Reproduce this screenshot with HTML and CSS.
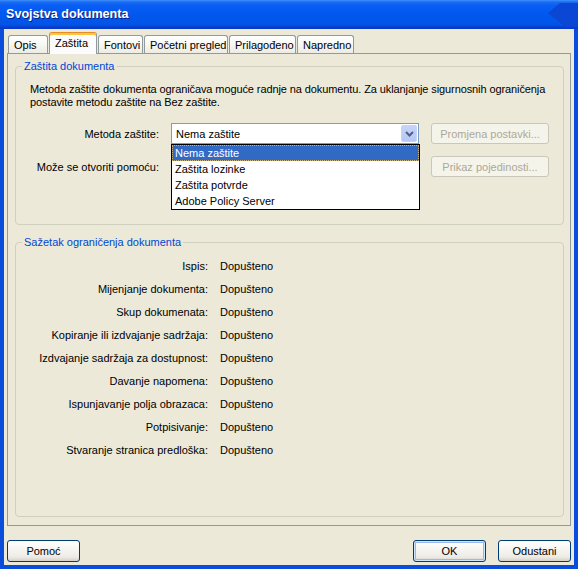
FILE: index.html
```html
<!DOCTYPE html>
<html lang="hr">
<head>
  <meta charset="UTF-8" />
  <title>Svojstva dokumenta</title>
  <link rel="stylesheet" href="styles.css">
</head>
<body>

  <div class="window">
    <div class="titlebar">
      <span class="title">Svojstva dokumenta</span>
      <span class="title-cap"></span>
    </div>

    <div class="frame">
      <div class="tabs">
        <div class="tab tab-opis">Opis</div>
        <div class="tab tab-zastita active">Zaštita</div>
        <div class="tab tab-fontovi">Fontovi</div>
        <div class="tab tab-pocetni">Početni pregled</div>
        <div class="tab tab-prilagodeno">Prilagođeno</div>
        <div class="tab tab-napredno">Napredno</div>
      </div>

      <div class="panel">
        <fieldset class="group group-protect">
          <legend>Zaštita dokumenta</legend>
          <p class="desc">Metoda zaštite dokumenta ograničava moguće radnje na dokumentu. Za uklanjanje sigurnosnih ograničenja<br>postavite metodu zaštite na Bez zaštite.</p>

          <div class="form-grid">
            <label class="form-label">Metoda zaštite:</label>
            <div class="combo">
              <div class="combo-box">
                <span>Nema zaštite</span>
                <span class="combo-arrow">
                  <svg width="9" height="6" viewBox="0 0 9 6">
                    <path d="M1 1 L4.5 4.5 L8 1" fill="none" stroke="#4d6185" stroke-width="2"/>
                  </svg>
                </span>
              </div>
              <ul class="combo-list">
                <li class="selected">Nema zaštite</li>
                <li>Zaštita lozinke</li>
                <li>Zaštita potvrde</li>
                <li>Adobe Policy Server</li>
              </ul>
            </div>
            <button class="btn" disabled>Promjena postavki...</button>

            <label class="form-label">Može se otvoriti pomoću:</label>
            <div></div>
            <button class="btn" disabled>Prikaz pojedinosti...</button>
          </div>
        </fieldset>

        <fieldset class="group group-summary">
          <legend>Sažetak ograničenja dokumenta</legend>
          <dl class="summary">
            <dt>Ispis:</dt><dd>Dopušteno</dd>
            <dt>Mijenjanje dokumenta:</dt><dd>Dopušteno</dd>
            <dt>Skup dokumenata:</dt><dd>Dopušteno</dd>
            <dt>Kopiranje ili izdvajanje sadržaja:</dt><dd>Dopušteno</dd>
            <dt>Izdvajanje sadržaja za dostupnost:</dt><dd>Dopušteno</dd>
            <dt>Davanje napomena:</dt><dd>Dopušteno</dd>
            <dt>Ispunjavanje polja obrazaca:</dt><dd>Dopušteno</dd>
            <dt>Potpisivanje:</dt><dd>Dopušteno</dd>
            <dt>Stvaranje stranica predloška:</dt><dd>Dopušteno</dd>
          </dl>
        </fieldset>
      </div>

      <div class="footer">
        <button class="btn btn-action">Pomoć</button>
        <span class="spacer"></span>
        <button class="btn btn-action default">OK</button>
        <button class="btn btn-action">Odustani</button>
      </div>
    </div>
  </div>

</body>
</html>
```

FILE: styles.css
```css
* {
  box-sizing: border-box;
}

body {
  margin: 0;
  font-family: "Liberation Sans", "DejaVu Sans", sans-serif;
  font-size: 11px;
  color: #000;
  background: #ece9d8;
}

.window {
  width: 578px;
  height: 569px;
  display: flex;
  flex-direction: column;
}

/* title bar */
.titlebar {
  height: 29px;
  flex: 0 0 29px;
  display: flex;
  align-items: center;
  padding-left: 6px;
  background: linear-gradient(to bottom, #3d91f8 0, #1c6cf2 2px, #0a5ef4 5px, #0058ee 50%, #0254e6 85%, #0a3fcc 93%, #0836c4 100%);
}

.title {
  color: #fff;
  font-weight: bold;
  font-size: 12.6px;
  text-shadow: 1px 1px 0 #0a1f80;
  margin-top: -1px;
}

.title-cap {
  margin-left: auto;
  width: 30px;
  height: 23px;
  background: #0947d4;
  clip-path: polygon(0 45%, 40% 0, 100% 0, 100% 100%, 55% 100%);
}

/* window frame */
.frame {
  flex: 1;
  display: flex;
  flex-direction: column;
  border: solid #0a4ddd;
  border-width: 0 4px 4px;
  padding: 0 3px;
  background: #ece9d8;
}

/* tabs */
.tabs {
  display: flex;
  align-items: flex-end;
  gap: 1px;
  height: 21px;
  margin-top: 3px;
  padding-left: 1px;
  position: relative;
  z-index: 2;
}

.tab {
  height: 18px;
  padding: 3px 0 0 5px;
  border: 1px solid #919b9c;
  border-bottom: none;
  border-radius: 3px 3px 0 0;
  background: linear-gradient(to bottom, #fff 0, #f7f7f3 50%, #ecebe5 100%);
  white-space: nowrap;
}

.tab.active {
  height: 22px;
  margin-bottom: -1px;
  padding-top: 4px;
  background: #fcfcfe;
  border-top-color: #e68b2c;
  box-shadow: inset 0 2px 0 #ffc83c;
}

.tab-opis { width: 40px; }
.tab-zastita { width: 48px; }
.tab-fontovi { width: 45px; }
.tab-pocetni { width: 84px; }
.tab-prilagodeno { width: 67px; }
.tab-napredno { width: 57px; }

/* tab page */
.panel {
  height: 473px;
  flex: 0 0 473px;
  border: 1px solid #919b9c;
  padding: 0 6px 0 7px;
  background: #ece9d8;
}

.group {
  margin: 6px 0 0;
  padding: 10px 14px 0;
  border: 1px solid #d0d0bf;
  border-radius: 4px;
}

.group legend {
  margin-left: -8px;
  padding: 0 2px;
  line-height: 13px;
  color: #0046d5;
}

.group-protect {
  height: 165px;
}

.group-summary {
  margin-top: 11px;
  height: 281px;
  padding-top: 5px;
}

.desc {
  margin: 0;
  line-height: 13px;
  white-space: nowrap;
  letter-spacing: -0.1px;
}

/* protection form */
.form-grid {
  display: grid;
  grid-template-columns: 129px 248px 118px;
  grid-auto-rows: 21px;
  column-gap: 12px;
  row-gap: 12px;
  margin-top: 14px;
}

.form-label {
  align-self: center;
  text-align: right;
  white-space: nowrap;
}

.combo {
  position: relative;
}

.combo-box {
  height: 21px;
  display: flex;
  align-items: center;
  padding-left: 4px;
  border: 1px solid #7f9db9;
  background: #fff;
}

.combo-arrow {
  margin-left: auto;
  width: 16px;
  height: 17px;
  margin-right: 1px;
  display: flex;
  align-items: center;
  justify-content: center;
  border: 1px solid #c3d3fd;
  border-radius: 2px;
  background: linear-gradient(to bottom, #c6d4f8 0, #b7c7f4 100%);
}

.combo-list {
  position: absolute;
  top: 21px;
  left: 0;
  width: 249px;
  margin: 0;
  padding: 0;
  list-style: none;
  border: 1px solid #000;
  background: #fff;
  z-index: 5;
}

.combo-list li {
  height: 16px;
  line-height: 16px;
  padding-left: 3px;
}

.combo-list li.selected {
  background: #316ac5;
  color: #fff;
  outline: 1px dotted #c9b07a;
  outline-offset: -1px;
}

/* buttons */
.btn {
  height: 21px;
  padding: 0;
  font-family: inherit;
  font-size: 11px;
  color: #000;
  border: 1px solid #003c74;
  border-radius: 3px;
  background: linear-gradient(to bottom, #fff 0, #f7f6f2 40%, #ecebe6 80%, #d6d0c5 100%);
}

.btn:disabled {
  color: #aca899;
  border-color: #c9c7ba;
  background: #f5f4ea;
}

/* summary rows */
.summary {
  display: grid;
  grid-template-columns: 178px auto;
  grid-auto-rows: 23px;
  column-gap: 12px;
  align-items: center;
  margin: 0;
}

.summary dt {
  text-align: right;
  white-space: nowrap;
}

.summary dd {
  margin: 0;
}

/* footer */
.footer {
  display: flex;
  gap: 12px;
  margin-top: 14px;
}

.spacer {
  flex: 1;
}

.btn-action {
  width: 73px;
  height: 22px;
}

.btn-action.default {
  box-shadow: inset 0 0 0 1px #cee7ff, inset 0 0 0 2px #98b8ea;
}
```
